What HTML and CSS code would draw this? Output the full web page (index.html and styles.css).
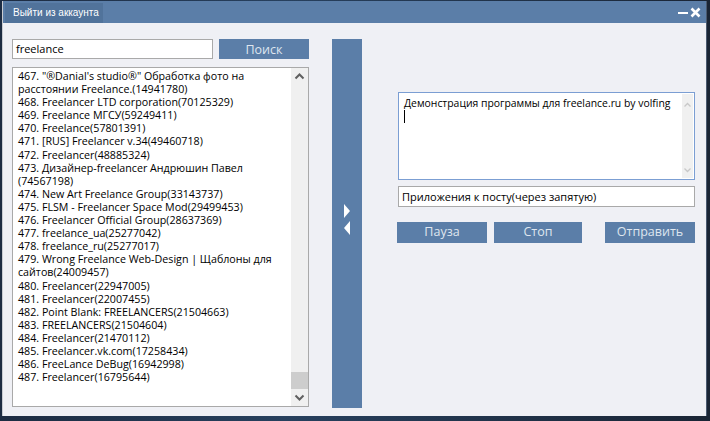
FILE: index.html
```html
<!DOCTYPE html>
<html lang="ru">
<head>
    <meta charset="UTF-8">
    <title>Выйти из аккаунта</title>
    <link rel="stylesheet" href="styles.css">
</head>
<body>
    <div class="window">
        <div class="titlebar">
            <span class="logout">Выйти из аккаунта</span>
            <div class="win-controls">
                <span class="min"></span>
                <svg class="close" width="11" height="11" viewBox="0 0 11 11"><path d="M1.5 1.5 L9.5 9.5 M9.5 1.5 L1.5 9.5" stroke="#fff" stroke-width="2.6"/></svg>
            </div>
        </div>

        <div class="content">
            <div class="left-col">
                <div class="search-row">
                    <div class="field search-field">freelance</div>
                    <div class="btn search-btn">Поиск</div>
                </div>
                <div class="listbox">
                    <div class="list-items">
                        <div>467. "®Danial's studio®" Обработка фото на расстоянии Freelance.(14941780)</div>
                        <div>468. Freelancer LTD corporation(70125329)</div>
                        <div>469. Freelance МГСУ(59249411)</div>
                        <div>470. Freelance(57801391)</div>
                        <div>471. [RUS] Freelancer v.34(49460718)</div>
                        <div>472. Freelancer(48885324)</div>
                        <div>473. Дизайнер-freelancer Андрюшин Павел (74567198)</div>
                        <div>474. New Art Freelance Group(33143737)</div>
                        <div>475. FLSM - Freelancer Space Mod(29499453)</div>
                        <div>476. Freelancer Official Group(28637369)</div>
                        <div>477. freelance_ua(25277042)</div>
                        <div>478. freelance_ru(25277017)</div>
                        <div>479. Wrong Freelance Web-Design | Щаблоны для сайтов(24009457)</div>
                        <div>480. Freelancer(22947005)</div>
                        <div>481. Freelancer(22007455)</div>
                        <div>482. Point Blank: FREELANCERS(21504663)</div>
                        <div>483. FREELANCERS(21504604)</div>
                        <div>484. Freelancer(21470112)</div>
                        <div>485. Freelancer.vk.com(17258434)</div>
                        <div>486. FreeLance DeBug(16942998)</div>
                        <div>487. Freelancer(16795644)</div>
                    </div>
                    <div class="scrollbar">
                        <svg class="arrow" width="17" height="17" viewBox="0 0 17 17"><polyline points="4.5,10.5 8.5,6.5 12.5,10.5" fill="none" stroke="#606060" stroke-width="2"/></svg>
                        <div class="track"><div class="thumb"></div></div>
                        <svg class="arrow" width="17" height="17" viewBox="0 0 17 17"><polyline points="4.5,6.5 8.5,10.5 12.5,6.5" fill="none" stroke="#606060" stroke-width="2"/></svg>
                    </div>
                </div>
            </div>

            <div class="toggle-bar">
                <svg width="8" height="32" viewBox="0 0 8 32"><polygon points="1,0 7,7 1,14" fill="#fff"/><polygon points="7,17 1,24 7,31" fill="#fff"/></svg>
            </div>

            <div class="right-col">
                <div class="post-text">
                    <div class="post-body">Демонстрация программы для freelance.ru by volfing<br><span class="caret"></span></div>
                    <div class="mini-scroll">
                        <svg width="11" height="14" viewBox="0 0 11 14"><polyline points="2.5,8.5 5.5,5.5 8.5,8.5" fill="none" stroke="#c8c8c8" stroke-width="1.3"/></svg>
                        <svg width="11" height="14" viewBox="0 0 11 14"><polyline points="2.5,5.5 5.5,8.5 8.5,5.5" fill="none" stroke="#c8c8c8" stroke-width="1.3"/></svg>
                    </div>
                </div>
                <div class="field attach-field">Приложения к посту(через запятую)</div>
                <div class="actions">
                    <div class="btn pause-btn">Пауза</div>
                    <div class="btn stop-btn">Стоп</div>
                    <div class="btn send-btn">Отправить</div>
                </div>
            </div>
        </div>
    </div>
</body>
</html>
```

FILE: styles.css
```css
:root {
    --blue: #5b7ea8;
    --window-bg: #eff0f5;
    --border: #a9a9a9;
}

* {
    margin: 0;
    padding: 0;
    box-sizing: border-box;
}

body {
    width: 710px;
    height: 421px;
    overflow: hidden;
    background: linear-gradient(90deg, #1d2c42 0%, #27405e 40%, #1a2535 100%);
    font-family: 'Open Sans', 'Noto Sans', sans-serif;
    color: #000;
}

.window {
    margin: 1px 3px 0 2px;
    width: 705px;
    height: 415px;
    background: var(--window-bg);
    border-left: 1px solid #c9ccd2;
    border-right: 1px solid #4a5a70;
    display: flex;
    flex-direction: column;
}

.titlebar {
    height: 22px;
    background: var(--blue);
    display: flex;
    align-items: center;
    justify-content: space-between;
    padding: 0 5px 0 2px;
}

.logout {
    font-family: 'Liberation Sans', sans-serif;
    font-size: 10px;
    color: #fff;
    background: #51739b;
    height: 20px;
    line-height: 20px;
    padding: 0 4px 0 8px;
    margin-top: 1px;
}

.win-controls {
    display: flex;
    align-items: center;
    gap: 2px;
}

.min {
    display: block;
    width: 10px;
    height: 2px;
    margin-top: 2px;
    background: #fff;
}

.content {
    flex: 1;
    display: flex;
    padding: 16px 0 0 9px;
}

.left-col {
    width: 297px;
    display: flex;
    flex-direction: column;
    gap: 8px;
}

.search-row {
    display: flex;
    gap: 6px;
    height: 20px;
}

.field {
    background: #fff;
    border: 1px solid var(--border);
    font-size: 11px;
    padding: 0 3px;
    line-height: 18px;
}

.search-field {
    width: 201px;
}

.btn {
    background: var(--blue);
    color: #dfe6ef;
    font-size: 12.5px;
    text-align: center;
    line-height: 20px;
}

.search-btn {
    width: 90px;
    line-height: 21px;
}

.listbox {
    height: 340px;
    background: #fff;
    border: 1px solid var(--border);
    display: flex;
}

.list-items {
    flex: 1;
    padding: 2px 4px 0 5px;
    font-size: 10.7px;
    line-height: 13.1px;
    overflow: hidden;
}

.scrollbar {
    width: 17px;
    background: #f0f0f0;
    display: flex;
    flex-direction: column;
}

.track {
    flex: 1;
    display: flex;
    flex-direction: column;
    justify-content: flex-end;
}

.thumb {
    height: 17px;
    background: #cdcdcd;
}

.toggle-bar {
    width: 30px;
    height: 369px;
    margin-left: 23px;
    background: var(--blue);
    display: flex;
    align-items: center;
    justify-content: center;
    padding-bottom: 8px;
}

.right-col {
    width: 297px;
    margin-left: 36px;
    padding-top: 53px;
    display: flex;
    flex-direction: column;
}

.post-text {
    height: 88px;
    background: #fff;
    border: 1px solid #7b9ed3;
    display: flex;
}

.post-body {
    flex: 1;
    font-size: 10.4px;
    line-height: 13px;
    padding: 4px 0 4px 5px;
    white-space: nowrap;
    overflow: hidden;
}

.caret {
    display: inline-block;
    width: 1px;
    height: 13px;
    background: #000;
    vertical-align: top;
}

.mini-scroll {
    width: 11px;
    margin: 1px 1px 1px 0;
    background: #f0f0f0;
    display: flex;
    flex-direction: column;
    justify-content: space-between;
    padding: 4px 0 1px;
}

.attach-field {
    margin-top: 6px;
    height: 21px;
    line-height: 19px;
}

.actions {
    margin-top: 15px;
    display: flex;
    height: 21px;
}

.pause-btn {
    width: 90px;
    margin-left: -1px;
}

.stop-btn {
    width: 88px;
    margin-left: 7px;
}

.send-btn {
    width: 90px;
    margin-left: 23px;
}
```
